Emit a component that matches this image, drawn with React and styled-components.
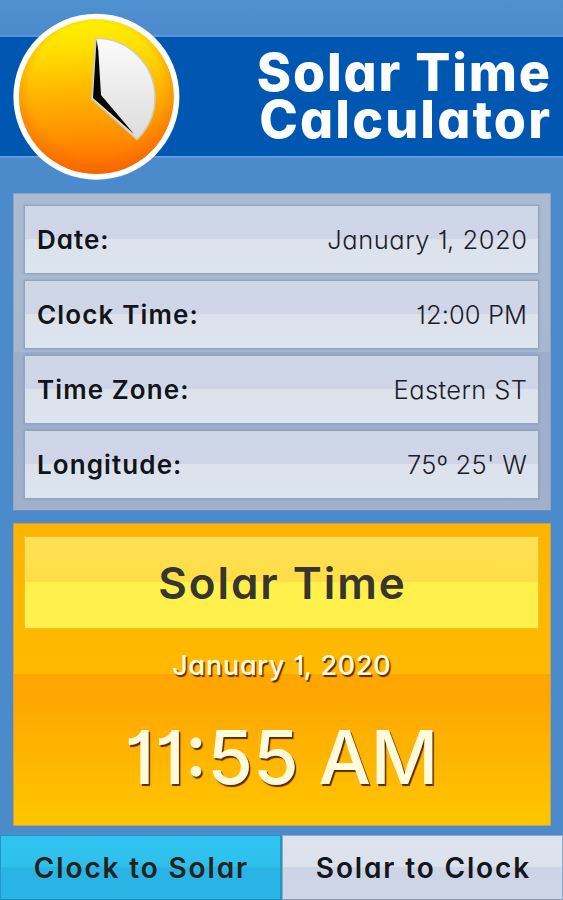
import React from 'react'
import styled, { createGlobalStyle } from 'styled-components'

const GlobalStyle = createGlobalStyle`
* {
box-sizing: border-box;
}
body {
margin: 0;
background: #4b8bcb;
font-family: Inter, 'Open Sans', sans-serif;
font-feature-settings: 'cv11', 'cv01';
}
`

const Screen = styled.div`
width: 563px;
height: 900px;
display: flex;
flex-direction: column;
overflow: hidden;
background: linear-gradient(180deg, #4f90d0 0, #4b8bcb 37px, #4b8bcb 100%);
`

const Header = styled.header`
height: 193px;
display: flex;
align-items: center;
justify-content: space-between;
padding: 0 13px;
background: linear-gradient(180deg, transparent 34px, #5c94d8 36px, #5c94d8 37px, #0057b2 37px, #0057b2 155.5px, #6a9fdf 156px, #6a9fdf 157px, transparent 158px);
`

const Logo = styled.svg`
width: 168px;
height: 168px;
flex: none;
margin-left: -1px;
`

const Title = styled.h1`
margin: 0;
padding-bottom: 1px;
display: flex;
flex-direction: column;
align-items: flex-end;
color: #fdfdff;
font-size: 52px;
font-weight: 800;
line-height: 47px;
`

const Spaced = styled.span`
display: inline-block;
letter-spacing: ${p => p.$track}px;
margin-right: -${p => p.$track}px;
white-space: nowrap;
`

const Panel = styled.section`
height: 318px;
margin: 0 12px 0 13px;
padding: 11px 11px 11px 10px;
display: flex;
flex-direction: column;
gap: 6px;
border: 1px solid #8ea4c6;
border-bottom-color: #6f8cb4;
background: linear-gradient(180deg, #abbbd0 0%, #a8b7ce 50%, #9eadc9 50%, #a2b0cc 100%);
`

const Row = styled.div`
height: 69px;
display: flex;
align-items: center;
justify-content: space-between;
padding: 0 11px 0 12px;
border: 1px solid #90a5c2;
background: linear-gradient(180deg, #cdd7e6 0%, #ced5e7 49%, #dbe2ec 49%, #dce4ed 100%);
box-shadow: 0 0 2px rgba(110, 130, 170, .6);
`

const Label = styled.span`
color: #111418;
font-size: 26px;
font-weight: 600;
`

const Value = styled.span`
color: #1b2028;
font-size: 25.5px;
font-weight: 300;
`

const Result = styled.section`
height: 303px;
margin: 12px 12px 0 13px;
padding: 12px 11px 0 10px;
display: flex;
flex-direction: column;
align-items: center;
border: 1px solid #c9a04a;
background: linear-gradient(180deg, #ffb500 0%, #ffb900 50%, #ffa500 50%, #ffa800 60%, #ffc600 100%);
`

const ResultTitle = styled.h2`
width: 100%;
height: 93px;
margin: 0 0 22px;
display: flex;
align-items: center;
justify-content: center;
border: 1px solid #f0c02c;
color: #36352f;
font-size: 44px;
font-weight: 600;
background: linear-gradient(180deg, #ffe154 0%, #ffdd47 49%, #fff04c 49%, #fff04c 100%);
`

const ResultDate = styled.div`
color: #fffbdc;
font-size: 27px;
font-weight: 500;
line-height: 30px;
text-shadow: 1.5px 1.5px 1px #5a2a00;
`

const ResultTime = styled.div`
margin-top: 39px;
color: #fffbdc;
font-size: 74px;
font-weight: 500;
line-height: 74px;
text-shadow: 1.5px 1.5px 1px #5a2a00;
`

const Tabs = styled.nav`
height: 65px;
margin-top: 9px;
display: grid;
grid-template-columns: 282px 281px;
`

const Tab = styled.button`
margin: 0;
padding: 0;
border: 1px solid ${p => p.$active ? '#1f98c9' : '#93a8c8'};
border-right-width: ${p => p.$active ? '2px' : '1px'};
border-bottom-color: ${p => p.$active ? '#1c8fbd' : '#8497b8'};
color: ${p => p.$active ? '#26221c' : '#14161a'};
font: inherit;
font-feature-settings: inherit;
font-size: 28px;
font-weight: 600;
background: ${p => p.$active
        ? 'linear-gradient(180deg, #2fc4ee 0%, #2fc0ea 50%, #2ab4e6 50%, #2ab5e7 100%)'
        : 'linear-gradient(180deg, #dde4ed 0%, #dbe2ec 50%, #cdd4e6 50%, #cdd5e6 100%)'};
`

const rows = [
    { label: 'Date:', value: 'January 1, 2020', labelTrack: 1, valueTrack: 0.55 },
    { label: 'Clock Time:', value: '12:00 PM', labelTrack: 1.15, valueTrack: 0.1 },
    { label: 'Time Zone:', value: 'Eastern ST', labelTrack: 1.1, valueTrack: 0.4 },
    { label: 'Longitude:', value: '75º 25\' W', labelTrack: 1.1, valueTrack: 0.35 },
]

function ClockLogo() {
    return (
        <Logo viewBox="12 12.5 168 168">
            <defs>
                <linearGradient id="sun" x1="0.47" y1="0" x2="0.53" y2="1">
                    <stop offset="0" stopColor="#fff000" />
                    <stop offset="0.18" stopColor="#ffe000" />
                    <stop offset="0.45" stopColor="#ffb800" />
                    <stop offset="0.75" stopColor="#ff9000" />
                    <stop offset="1" stopColor="#ff6a00" />
                </linearGradient>
                <radialGradient id="rim" gradientUnits="userSpaceOnUse" cx="96" cy="88" r="88">
                    <stop offset="0.74" stopColor="#f06000" stopOpacity="0" />
                    <stop offset="1" stopColor="#f06000" stopOpacity="0.55" />
                </radialGradient>
                <linearGradient id="face" x1="0" y1="0" x2="0" y2="1">
                    <stop offset="0" stopColor="#fbfbfb" />
                    <stop offset="1" stopColor="#dcdcdc" />
                </linearGradient>
            </defs>
            <circle cx="96.4" cy="96.2" r="83" fill="#fff" />
            <circle cx="96.4" cy="96.2" r="77.4" fill="url(#sun)" />
            <circle cx="96.4" cy="96.2" r="77.4" fill="url(#rim)" />
            <path d="M95.8 38 C128 37 155 64 155 97 C155 113 148 128 137 139 L91.8 98.5 Z" fill="url(#face)" stroke="#cfcdb8" strokeWidth="1.6" strokeLinejoin="round" />
            <path d="M96.6 39 L98.3 50 L101 94.5 L134 133.5 L97 101 L93 97.5 L95.4 58 Z" fill="#050505" />
        </Logo>
    )
}

export default function App() {
    return (
        <Screen>
            <GlobalStyle />
            <Header>
                <ClockLogo />
                <Title>
                    <Spaced $track={1.8}>Solar Time</Spaced>
                    <Spaced $track={2.1}>Calculator</Spaced>
                </Title>
            </Header>
            <Panel>
                {rows.map(r => (
                    <Row key={r.label}>
                        <Label><Spaced $track={r.labelTrack}>{r.label}</Spaced></Label>
                        <Value><Spaced $track={r.valueTrack}>{r.value}</Spaced></Value>
                    </Row>
                ))}
            </Panel>
            <Result>
                <ResultTitle><Spaced $track={1.95}>Solar Time</Spaced></ResultTitle>
                <ResultDate><Spaced $track={0.75}>January 1, 2020</Spaced></ResultDate>
                <ResultTime><Spaced $track={0}>11:55 AM</Spaced></ResultTime>
            </Result>
            <Tabs>
                <Tab $active><Spaced $track={1.85}>Clock to Solar</Spaced></Tab>
                <Tab><Spaced $track={1.85}>Solar to Clock</Spaced></Tab>
            </Tabs>
        </Screen>
    )
}
